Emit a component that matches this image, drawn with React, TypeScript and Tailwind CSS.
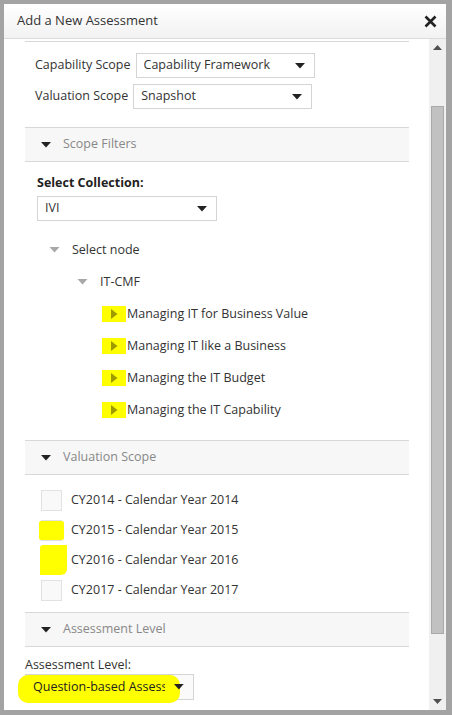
import React from "react";

const font = { fontFamily: '"Open Sans", "Noto Sans", sans-serif' };

const Caret = ({ className = "" }: { className?: string }) => (
  <svg width="10" height="6" viewBox="0 0 10 6" className={className}>
    <path d="M0 0 L10 0 L5 5.5 Z" fill="currentColor" />
  </svg>
);

const Select = ({ value, w }: { value: string; w: string }) => (
  <div
    className={`${w} h-[25px] border border-[#d4d4d4] bg-white flex items-center justify-between pl-[7px] pr-[9px] text-[12.5px] text-[#333]`}
  >
    <span className="truncate">{value}</span>
    <Caret className="text-[#222] shrink-0" />
  </div>
);

const SectionHeader = ({ title }: { title: string }) => (
  <div className="h-[35px] border-y border-[#d8d8d8] bg-[#f7f7f7] flex items-center pl-[16px] text-[12.5px] text-[#888]">
    <Caret className="text-[#222] mr-[12px]" />
    <span>{title}</span>
  </div>
);

const children = [
  "Managing IT for Business Value",
  "Managing IT like a Business",
  "Managing the IT Budget",
  "Managing the IT Capability",
];

const years = [
  { code: "CY2014", year: "2014", mark: "" },
  { code: "CY2015", year: "2015", mark: "a" },
  { code: "CY2016", year: "2016", mark: "b" },
  { code: "CY2017", year: "2017", mark: "" },
];

export default function App() {
  return (
    <div
      className="w-[452px] h-[715px] bg-[#a3a3a3] pt-[4px] pl-[4px] pr-[6px] pb-[5px] overflow-hidden"
      style={font}
    >
      <div className="w-full h-full bg-white flex flex-col">
        {/* header */}
        <div className="h-[35px] shrink-0 bg-gradient-to-b from-white to-[#f2f2f2] border-b border-[#dcdcdc] flex items-center justify-between pl-[13px] pr-[9px]">
          <span className="text-[13px] text-[#333]">Add a New Assessment</span>
          <svg width="13" height="13" viewBox="0 0 13 13">
            <path
              d="M1.5 1.5 L11.5 11.5 M11.5 1.5 L1.5 11.5"
              stroke="#222"
              strokeWidth="2.6"
            />
          </svg>
        </div>

        <div className="flex flex-1 min-h-0">
          {/* content */}
          <div className="flex-1 overflow-hidden pl-[21px] pr-[20px]">
            <div className="mt-[2px] border-t border-[#d8d8d8]" />

            <div className="pl-[10px] pt-[11px] flex flex-col gap-[6px] text-[12.5px] text-[#333]">
              <div className="flex items-center gap-[5px]">
                <span>Capability Scope</span>
                <Select value="Capability Framework" w="w-[179px]" />
              </div>
              <div className="flex items-center gap-[5px]">
                <span>Valuation Scope</span>
                <Select value="Snapshot" w="w-[179px]" />
              </div>
            </div>

            <div className="mt-[18px]">
              <SectionHeader title="Scope Filters" />
            </div>

            <div className="pl-[12px] pt-[12px]">
              <div className="text-[12.5px] font-bold text-[#222] leading-[18px]">
                Select Collection:
              </div>
              <div className="mt-[4px]">
                <Select value="IVI" w="w-[180px]" />
              </div>

              <div className="mt-[13px] text-[12.5px] text-[#333]">
                <div className="h-[32px] flex items-center pl-[12px]">
                  <Caret className="text-[#a8a8a8] mr-[12px] w-[11px]" />
                  <span>Select node</span>
                </div>
                <div className="h-[32px] flex items-center pl-[40px]">
                  <Caret className="text-[#a8a8a8] mr-[12px] w-[11px]" />
                  <span>IT-CMF</span>
                </div>
                {children.map((c) => (
                  <div key={c} className="h-[32px] flex items-center pl-[66px]">
                    <div className="relative h-[16px] w-[24px] flex items-center">
                      <span className="absolute -left-[1px] top-0 w-[24px] h-[16px] bg-[#ffff00]" />
                      <svg
                        width="7"
                        height="10"
                        viewBox="0 0 7 10"
                        className="relative ml-[8px]"
                      >
                        <path d="M0 0 L6.5 5 L0 10 Z" fill="#9c9c00" />
                      </svg>
                    </div>
                    <span>{c}</span>
                  </div>
                ))}
              </div>
            </div>

            <div className="mt-[14px]">
              <SectionHeader title="Valuation Scope" />
            </div>

            <div className="pt-[10px] pl-[16px] text-[12.5px] text-[#333]">
              {years.map((y) => (
                <div key={y.code} className="h-[30px] flex items-center">
                  <div className="relative w-[21px] h-[21px] mr-[9px]">
                    <div className="w-[21px] h-[21px] border border-[#e2e2e2] bg-[#f9f9f9]" />
                    {y.mark === "a" && (
                      <span className="absolute -left-[2px] top-[1px] w-[25px] h-[19px] bg-[#ffff00] rounded-[2px]" />
                    )}
                    {y.mark === "b" && (
                      <span className="absolute -left-[1px] -top-[5px] w-[27px] h-[30px] bg-[#ffff00] rounded-br-[6px] rounded-tl-[3px]" />
                    )}
                  </div>
                  <span>
                    {y.code} - Calendar Year {y.year}
                  </span>
                </div>
              ))}
            </div>

            <div className="mt-[7px]">
              <SectionHeader title="Assessment Level" />
            </div>

            <div className="pt-[10px] text-[12.5px] text-[#333]">
              <div className="leading-[16px]">Assessment Level:</div>
              <div className="relative mt-[1px] w-[169px] h-[26px]">
                <div className="w-[169px] h-[26px] border border-[#d4d4d4] bg-[#fafafa]" />
                <span className="absolute -left-[7px] top-[1px] w-[162px] h-[28px] bg-[#ffff00] rounded-[10px]" />
                <div className="absolute inset-0 flex items-center pl-[8px] pr-[10px]">
                  <span className="w-[136px] overflow-hidden whitespace-nowrap text-[#222]">
                    Question-based Assess
                  </span>
                  <Caret className="text-[#222] ml-[9px]" />
                </div>
              </div>
            </div>
          </div>

          {/* scrollbar */}
          <div className="w-[17px] shrink-0 bg-[#f0f0f0] flex flex-col items-center">
            <div className="h-[17px] flex items-center justify-center">
              <svg width="9" height="5" viewBox="0 0 9 5">
                <path d="M0 5 L4.5 0 L9 5 Z" fill="#505050" />
              </svg>
            </div>
            <div className="mt-[50px] w-[13px] h-[528px] bg-[#c1c1c1] border border-[#a9a9a9]" />
            <div className="flex-1" />
            <div className="h-[17px] flex items-center justify-center">
              <svg width="9" height="5" viewBox="0 0 9 5">
                <path d="M0 0 L4.5 5 L9 0 Z" fill="#505050" />
              </svg>
            </div>
          </div>
        </div>
      </div>
    </div>
  );
}
